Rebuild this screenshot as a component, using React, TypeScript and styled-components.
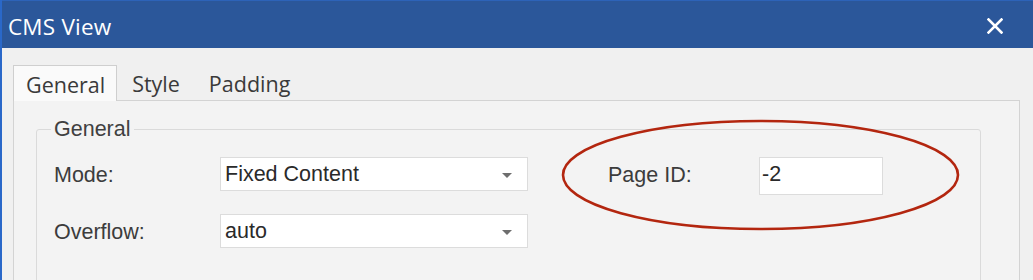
import styled, { createGlobalStyle } from "styled-components"

const GlobalStyle = createGlobalStyle`
  html, body {
    margin: 0;
    padding: 0;
    background: #f0f0f0;
  }
`

const Window = styled.div`
  position: relative;
  width: 1033px;
  height: 280px;
  overflow: hidden;
  box-sizing: border-box;
  border-left: 2px solid #2a68c9;
  background: #f0f0f0;
  font-family: "Liberation Sans", Arial, sans-serif;
`

const TitleBar = styled.div`
  height: 48px;
  box-sizing: border-box;
  border-top: 1px solid #2d63b8;
  background: #2b579a;
  display: flex;
  align-items: center;
  justify-content: space-between;
  padding: 3px 30px 0 6px;
`

const Title = styled.div`
  font-family: "Open Sans", "Noto Sans", sans-serif;
  font-size: 22.5px;
  color: #ffffff;
  letter-spacing: 0.2px;
`

const CloseButton = styled.button`
  border: 0;
  background: none;
  padding: 0;
  width: 16px;
  height: 16px;
  display: flex;
`

const Body = styled.div`
  padding: 16px 13px 0 11px;
`

const TabRow = styled.div`
  display: flex;
  align-items: flex-end;
  height: 36px;
`

const Tab = styled.div<{ $active?: boolean }>`
  font-family: "Open Sans", "Noto Sans", sans-serif;
  font-size: 21.5px;
  color: #3a3a3a;
  height: 36px;
  box-sizing: border-box;
  display: flex;
  align-items: center;
  padding: 2px ${(p) => (p.$active ? "11px" : "13px")} 0 12px;
  background: ${(p) => (p.$active ? "#fafafa" : "transparent")};
  border: 1px solid ${(p) => (p.$active ? "#cfcfcf" : "transparent")};
  border-bottom: 0;
  margin-bottom: ${(p) => (p.$active ? "-1px" : "0")};
  position: relative;
  z-index: 1;
  & + & {
    margin-left: 2px;
  }
`

const Panel = styled.div`
  border: 1px solid #d3d3d3;
  background: #f3f3f3;
  height: 200px;
  padding: 16px 38px 0 22px;
`

const GroupBox = styled.fieldset`
  margin: 0;
  border: 1px solid #dadada;
  border-radius: 3px;
  padding: 16px 0 0 17px;
  height: 170px;
  box-sizing: border-box;
`

const Legend = styled.legend`
  font-size: 21.5px;
  color: #404040;
  padding: 0 3px;
  margin-left: -3px;
  line-height: 24px;
`

const FormGrid = styled.div`
  display: grid;
  grid-template-columns: 166px 308px 80px 151px 124px;
  grid-template-rows: 38px 38px;
  row-gap: 19px;
  align-items: start;
`

const Label = styled.label`
  font-size: 21.5px;
  color: #3c3c3c;
  height: 36px;
  display: flex;
  align-items: center;
`

const Combo = styled.div`
  height: 34px;
  box-sizing: border-box;
  border: 1px solid #dcdcdc;
  background: #ffffff;
  display: flex;
  align-items: center;
  justify-content: space-between;
  padding: 0 15px 0 4px;
  font-size: 21.5px;
  color: #2a2a2a;
`

const Arrow = styled.span`
  width: 0;
  height: 0;
  border-left: 5.5px solid transparent;
  border-right: 5.5px solid transparent;
  border-top: 5px solid #6e6e6e;
  margin-top: 2px;
`

const TextBox = styled.div`
  height: 38px;
  box-sizing: border-box;
  border: 1px solid #dcdcdc;
  background: #ffffff;
  padding: 1px 2px 0;
  font-size: 21.5px;
  color: #2a2a2a;
  line-height: 30px;
`

const Highlight = styled.svg`
  position: absolute;
  left: 556px;
  top: 116px;
  pointer-events: none;
`

export default function App() {
  return (
    <Window>
      <GlobalStyle />
      <TitleBar>
        <Title>CMS View</Title>
        <CloseButton aria-label="Close">
          <svg width="16" height="16" viewBox="0 0 16 16">
            <path
              d="M1.5 1.5 L14.5 14.5 M14.5 1.5 L1.5 14.5"
              stroke="#ffffff"
              strokeWidth="2.6"
              strokeLinecap="square"
            />
          </svg>
        </CloseButton>
      </TitleBar>
      <Body>
        <TabRow>
          <Tab $active>General</Tab>
          <Tab>Style</Tab>
          <Tab>Padding</Tab>
        </TabRow>
        <Panel>
          <GroupBox>
            <Legend>General</Legend>
            <FormGrid>
              <Label>Mode:</Label>
              <Combo>
                Fixed Content
                <Arrow />
              </Combo>
              <span />
              <Label>Page ID:</Label>
              <TextBox>-2</TextBox>
              <Label>Overflow:</Label>
              <Combo>
                auto
                <Arrow />
              </Combo>
            </FormGrid>
          </GroupBox>
        </Panel>
      </Body>
      <Highlight width="410" height="120" viewBox="0 0 410 120">
        <ellipse
          cx="202.5"
          cy="59"
          rx="197.5"
          ry="54"
          fill="none"
          stroke="#b3260f"
          strokeWidth="2.6"
        />
      </Highlight>
    </Window>
  )
}
